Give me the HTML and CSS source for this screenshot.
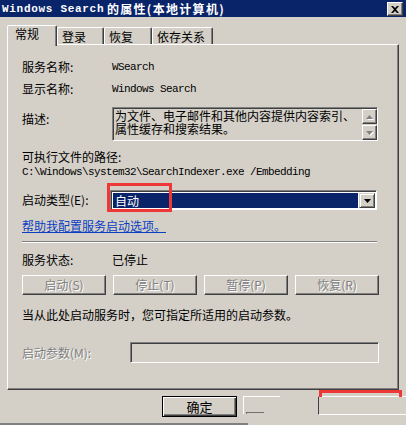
FILE: index.html
```html
<!DOCTYPE html>
<html lang="zh-CN">
<head>
<meta charset="utf-8">
<title>Windows Search 的属性</title>
<link rel="stylesheet" href="styles.css">
</head>
<body>
<div class="titlebar">
  <span class="title"><span class="title-en">Windows Search</span>&nbsp;<span class="title-zh">的属性(本地计算机)</span></span>
  <span class="close">
    <svg width="8" height="7" viewBox="0 0 8 7"><path d="M0 0h2l2 2 2-2h2L5 3.5 8 7H6L4 5 2 7H0l3-3.5z" fill="#000"/></svg>
  </span>
</div>

<div class="tabs">
  <div class="tab active">常规</div>
  <div class="tab t2">登录</div>
  <div class="tab t3">恢复</div>
  <div class="tab t4">依存关系</div>
</div>

<div class="panel">
  <div class="row r-name"><span class="lbl">服务名称:</span><span class="mono">WSearch</span></div>
  <div class="row r-disp"><span class="lbl">显示名称:</span><span class="mono">Windows Search</span></div>
  <div class="row r-desc">
    <span class="lbl lbl-desc">描述:</span>
    <div class="desc">
      <div class="desc-text"><div class="dl">为文件、电子邮件和其他内容提供内容索引、</div><div class="dl">属性缓存和搜索结果。</div></div>
      <div class="vscroll">
        <span class="sbtn"><svg width="7" height="4" viewBox="0 0 7 4"><path d="M3.5 0L7 4H0z" fill="#808080"/></svg></span>
        <span class="sbtn"><svg width="7" height="4" viewBox="0 0 7 4"><path d="M0 0h7L3.5 4z" fill="#808080"/></svg></span>
      </div>
    </div>
  </div>
  <div class="row r-path-lbl">可执行文件的路径:</div>
  <div class="row r-path"><span class="mono">C:\Windows\system32\SearchIndexer.exe /Embedding</span></div>
  <div class="row r-type">
    <span class="lbl lbl-type">启动类型(E):</span>
    <div class="select">
      <span class="sel-value">自动</span>
      <span class="sel-btn"><svg width="7" height="4" viewBox="0 0 7 4"><path d="M0 0h7L3.5 4z" fill="#000"/></svg></span>
      <span class="mark"></span>
    </div>
  </div>
  <div class="row r-link"><a class="link" href="#">帮助我配置服务启动选项。</a></div>
  <div class="sep"></div>
  <div class="row r-status"><span class="lbl">服务状态:</span><span>已停止</span></div>
  <div class="btnrow">
    <span class="btn disabled">启动(S)</span>
    <span class="btn disabled">停止(T)</span>
    <span class="btn disabled">暂停(P)</span>
    <span class="btn disabled">恢复(R)</span>
  </div>
  <div class="row r-hint">当从此处启动服务时，您可指定所适用的启动参数。</div>
  <div class="row r-param">
    <span class="lbl lbl-param disabled-text">启动参数(M):</span>
    <span class="field"></span>
  </div>
</div>

<div class="footer">
  <span class="btn default">确定</span>
  <span class="ghost1"><span class="ghost1-foot"></span></span>
  <span class="ghost2"><span class="ghost2-red"></span></span>
</div>
<div class="bottomline"></div>
</body>
</html>
```
FILE: styles.css
```css
* { box-sizing: border-box; }
html, body { margin: 0; padding: 0; }
body {
  width: 406px;
  height: 425px;
  overflow: hidden;
  background: #d4d0c8;
  font-family: "Noto Sans CJK SC", "Liberation Sans", sans-serif;
  font-size: 12px;
  line-height: 14px;
  color: #000;
}

/* title bar */
.titlebar {
  height: 17px;
  background: #0a246a;
  color: #fff;
  display: flex;
  align-items: center;
  justify-content: space-between;
  padding: 0 3px 0 2px;
}
.title {
  font-weight: bold;
  white-space: nowrap;
  display: flex;
  align-items: center;
}
.title-en {
  font-family: "Liberation Mono", monospace;
  font-size: 11px;
  letter-spacing: 0.7px;
  font-weight: bold;
}
.title-zh { letter-spacing: 1.3px; }
.close {
  width: 16px;
  height: 14px;
  margin-top: 1px;
  background: #d4d0c8;
  border: 1px solid;
  border-color: #fff #404040 #404040 #fff;
  box-shadow: inset -1px -1px #808080;
  display: flex;
  align-items: center;
  justify-content: center;
}

/* tabs */
.tabs {
  height: 27px;
  display: flex;
  align-items: flex-end;
  padding-left: 7px;
}
.tab {
  position: relative;
  height: 17px;
  border: 1px solid #fff;
  border-right-color: #404040;
  border-bottom: none;
  border-radius: 2px 2px 0 0;
  box-shadow: inset -1px 0 #808080;
  padding: 2px 0 0 4px;
  white-space: nowrap;
}
.tab.active {
  z-index: 1;
  width: 50px;
  height: 21px;
  margin-bottom: -2px;
  background: #d4d0c8;
  padding: 1px 0 0 7px;
}
.t2 { width: 47px; }
.t3 { width: 48px; }
.t4 { width: 61px; }

/* panel */
.panel {
  margin-left: 7px;
  width: 392px;
  height: 346px;
  border: 1px solid;
  border-color: #fff #404040 #404040 #fff;
  box-shadow: inset -1px -1px #808080;
  padding: 15px 0 0 14px;
}
.row {
  display: flex;
  align-items: center;
  white-space: nowrap;
}
.lbl { width: 90px; flex: none; }
.mono {
  font-family: "Liberation Mono", monospace;
  font-size: 11px;
  letter-spacing: -0.6px;
}
.r-name { height: 14px; }
.r-disp { height: 14px; margin-top: 8px; }
.r-desc { margin-top: 11px; align-items: flex-start; }
.lbl-desc { padding-top: 5px; }

.desc {
  width: 266px;
  height: 34px;
  display: flex;
  border: 1px solid;
  border-color: #808080 #fff #fff #808080;
  box-shadow: inset 1px 1px #404040;
  padding: 1px 0 0 1px;
}
.desc-text {
  flex: 1;
  padding: 0 0 0 1px;
  font-size: 12px;
}
.dl { height: 13px; line-height: 13px; }
.vscroll {
  width: 15px;
  display: flex;
  flex-direction: column;
  gap: 1px;
}
.sbtn {
  height: 15px;
  border: 1px solid;
  border-color: #fff #404040 #404040 #fff;
  box-shadow: inset -1px -1px #808080;
  display: flex;
  align-items: center;
  justify-content: center;
}
.sbtn svg { filter: drop-shadow(1px 1px 0 #fff); }

.r-path-lbl { height: 14px; margin-top: 9px; }
.r-path { height: 14px; margin-top: 1px; }

.r-type { margin-top: 11px; }
.lbl-type { width: 88px; }
.select {
  position: relative;
  width: 267px;
  height: 20px;
  display: flex;
  border: 1px solid;
  border-color: #808080 #fff #fff #808080;
  box-shadow: inset 1px 1px #404040;
  padding: 2px 1px 1px 2px;
  background: #fff;
}
.sel-value {
  flex: 1;
  background: #0a246a;
  color: #fff;
  padding-left: 2px;
  line-height: 15px;
}
.sel-btn {
  width: 16px;
  margin-left: 1px;
  background: #d4d0c8;
  border: 1px solid;
  border-color: #d4d0c8 #404040 #404040 #d4d0c8;
  box-shadow: inset 1px 1px #fff, inset -1px -1px #808080;
  display: flex;
  align-items: center;
  justify-content: center;
}
.mark {
  position: absolute;
  left: -4px;
  top: -8px;
  width: 65px;
  height: 29px;
  border: 3px solid #ee3838;
}

.r-link { height: 14px; margin-top: 9px; }
.link { color: #0b3fc2; text-decoration: underline; }

.sep {
  width: 355px;
  height: 2px;
  margin-top: 8px;
  border-top: 1px solid #808080;
  border-bottom: 1px solid #fff;
}
.r-status { height: 14px; margin-top: 10px; }

.btnrow {
  width: 357px;
  margin-top: 8px;
  display: flex;
  justify-content: space-between;
}
.btn {
  width: 84px;
  height: 20px;
  border: 1px solid;
  border-color: #fff #404040 #404040 #fff;
  box-shadow: inset -1px -1px #808080;
  display: flex;
  align-items: center;
  justify-content: center;
  line-height: 14px;
}
.btn.disabled, .disabled-text {
  color: #808080;
  text-shadow: 1px 1px 0 #fff;
}

.r-hint { height: 14px; margin-top: 13px; }
.r-param { margin-top: 20px; }
.lbl-param { width: 108px; }
.field {
  width: 249px;
  height: 21px;
  border: 1px solid;
  border-color: #808080 #fff #fff #808080;
  box-shadow: inset 1px 1px #404040;
}

/* footer */
.footer {
  position: relative;
  height: 21px;
  margin-top: 6px;
  display: flex;
  align-items: flex-start;
}
.btn.default {
  margin-left: 162px;
  width: 75px;
  height: 21px;
  border: 1px solid #000;
  box-shadow: inset 1px 1px #fff, inset -1px -1px #404040, inset -2px -2px #808080;
  font-size: 13px;
}
.ghost1 {
  position: relative;
  margin-left: 6px;
  width: 37px;
  height: 18px;
  border-top: 1px solid #fff;
  border-left: 1px solid #fff;
}
.ghost1-foot {
  position: absolute;
  left: 2px;
  top: 15px;
  width: 18px;
  height: 2px;
  border-top: 1px solid #707070;
  border-left: 1px solid #707070;
}
.ghost2 {
  position: relative;
  margin-left: 38px;
  width: 88px;
  height: 19px;
  border-top: 1px solid #fff;
  border-left: 1px solid #404040;
  border-bottom: 1px solid #fff;
}
.ghost2-red {
  position: absolute;
  left: 0;
  top: -7px;
  width: 83px;
  height: 7px;
  border: 3px solid #ee3838;
  border-bottom: none;
}
.bottomline {
  width: 248px;
  height: 2px;
  margin-top: 6px;
  background: #808080;
}
```
